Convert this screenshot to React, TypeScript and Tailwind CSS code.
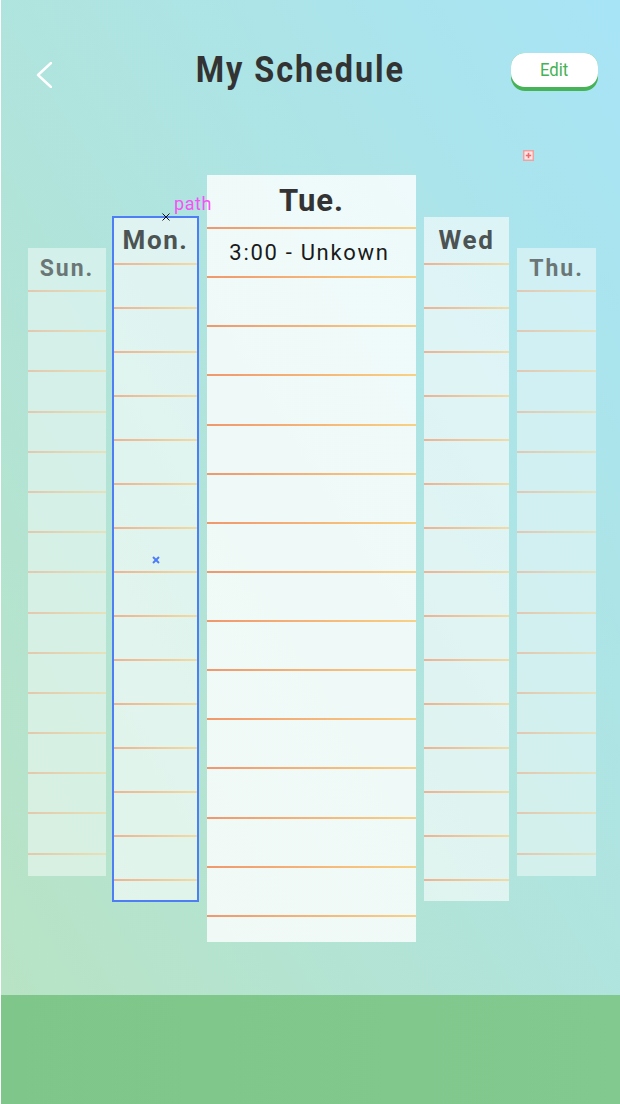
import React from "react";

type ColProps = {
  wrap: string;
  bg: string;
  headerH: string;
  rowH: string;
  bottomH: string;
  label: string;
  labelCls: string;
  lineCls: string;
  first?: React.ReactNode;
  overlay?: React.ReactNode;
};

function Line({ cls }: { cls: string }) {
  return <div className={"h-[2px] w-full bg-gradient-to-r from-[#f1976d] to-[#f8d184] " + cls} />;
}

function Column({ wrap, bg, headerH, rowH, bottomH, label, labelCls, lineCls, first, overlay }: ColProps) {
  const rows = Array.from({ length: 14 });
  return (
    <div className={"relative shrink-0 flex flex-col " + wrap + " " + bg}>
      <div className={"flex items-center justify-center font-bold " + headerH + " " + labelCls}>
        {label}
      </div>
      <Line cls={lineCls} />
      {rows.map((_, i) => (
        <React.Fragment key={i}>
          <div className={"flex items-center justify-center " + rowH}>{i === 0 ? first : null}</div>
          <Line cls={lineCls} />
        </React.Fragment>
      ))}
      <div className={bottomH} />
      {overlay}
    </div>
  );
}

export default function App() {
  return (
    <div
      className="relative w-[620px] h-[1104px] flex flex-col overflow-hidden border-l border-white/40"
      style={{ fontFamily: "Roboto, 'Noto Sans', sans-serif" }}
    >
      <div className="relative flex-1 flex flex-col bg-gradient-to-tr from-[#b8e3c4] to-[#a7e4f6]">
        {/* header */}
        <div className="h-[175px] pt-[53px]">
          <div className="flex items-start">
            <div className="ml-[35px] mt-[9px] w-[16px] h-[26px]">
              <svg width="16" height="26" viewBox="0 0 16 26" fill="none">
                <polyline
                  points="15,1 2,13 15,25"
                  stroke="#ffffff"
                  strokeWidth="2.4"
                  strokeLinecap="round"
                  strokeLinejoin="round"
                />
              </svg>
            </div>
            <div className="flex-1 flex justify-center pl-[38px]">
              <span className="inline-block scale-x-[0.9] text-[36px] leading-[34px] font-bold tracking-[2.2px] text-[#333333]">
                My Schedule
              </span>
            </div>
            <div className="mr-[22px] w-[87px] h-[38px] rounded-[14px] bg-[#46b356]">
              <div className="h-[34px] rounded-[14px] bg-white flex items-center justify-center pt-[1px]">
                <span className="inline-block scale-x-[0.88] text-[19px] font-normal text-[#45b254]">Edit</span>
              </div>
            </div>
          </div>
        </div>

        {/* red plus marker */}
        <div className="absolute left-[522px] top-[150px]">
          <svg width="11" height="11" viewBox="0 0 11 11">
            <rect x="0.75" y="0.75" width="9.5" height="9.5" fill="#fde8e8" stroke="#f3a0a0" strokeWidth="1.5" />
            <line x1="5.5" y1="2.8" x2="5.5" y2="8.2" stroke="#ef6b6b" strokeWidth="1.6" />
            <line x1="2.8" y1="5.5" x2="8.2" y2="5.5" stroke="#ef6b6b" strokeWidth="1.6" />
          </svg>
        </div>

        {/* columns */}
        <div className="flex items-start">
          <Column
            wrap="ml-[27px] mt-[73px] w-[78px]"
            bg="bg-white/45"
            headerH="h-[42px]"
            rowH="h-[38.2px]"
            bottomH="h-[21px]"
            label="Sun."
            labelCls="text-[23px] tracking-[2px] text-[#6b7676]"
            lineCls="opacity-45"
          />
          <Column
            wrap="ml-[7px] mt-[42px] w-[85px]"
            bg="bg-white/60"
            headerH="h-[46px]"
            rowH="h-[42px]"
            bottomH="h-[20px]"
            label="Mon."
            labelCls="text-[26px] tracking-[1.6px] text-[#4b5353]"
            lineCls="opacity-70"
            overlay={
              <>
                <div className="absolute z-10 -inset-[1px] border-2 border-[#4d7ef6] pointer-events-none" />
                <div className="absolute z-10 left-[49px] -top-[4px]">
                  <svg width="8" height="8" viewBox="0 0 8 8">
                    <line x1="0.5" y1="0.5" x2="7.5" y2="7.5" stroke="#111" strokeWidth="1" />
                    <line x1="7.5" y1="0.5" x2="0.5" y2="7.5" stroke="#111" strokeWidth="1" />
                  </svg>
                </div>
                <div className="absolute z-10 left-[61px] -top-[23px] text-[18px] leading-[20px] tracking-[0.6px] text-[#f752f5] whitespace-nowrap">
                  path
                </div>
                <div className="absolute z-10 left-[39px] top-[339px]">
                  <svg width="8" height="8" viewBox="0 0 8 8">
                    <line x1="1" y1="1" x2="7" y2="7" stroke="#4d7ef6" strokeWidth="2" />
                    <line x1="7" y1="1" x2="1" y2="7" stroke="#4d7ef6" strokeWidth="2" />
                  </svg>
                </div>
              </>
            }
          />
          <Column
            wrap="ml-[9px] mt-[0px] w-[209px]"
            bg="bg-white/80"
            headerH="h-[52px]"
            rowH="h-[47.14px]"
            bottomH="h-[25px]"
            label="Tue."
            labelCls="text-[31px] tracking-[1px] text-[#333333]"
            lineCls="opacity-100"
            first={
              <span className="text-[22px] tracking-[1.7px] text-[#1a1a1a] -ml-[4px]">3:00 - Unkown</span>
            }
          />
          <Column
            wrap="ml-[8px] mt-[42px] w-[85px]"
            bg="bg-white/60"
            headerH="h-[46px]"
            rowH="h-[42px]"
            bottomH="h-[20px]"
            label="Wed"
            labelCls="text-[26px] tracking-[1.6px] text-[#4b5353]"
            lineCls="opacity-70"
          />
          <Column
            wrap="ml-[8px] mt-[73px] w-[79px]"
            bg="bg-white/45"
            headerH="h-[42px]"
            rowH="h-[38.2px]"
            bottomH="h-[21px]"
            label="Thu."
            labelCls="text-[23px] tracking-[2px] text-[#6b7676]"
            lineCls="opacity-45"
          />
        </div>
      </div>
      <div className="h-[109px] bg-gradient-to-r from-[#7fc68a] to-[#82c98f]" />
    </div>
  );
}
